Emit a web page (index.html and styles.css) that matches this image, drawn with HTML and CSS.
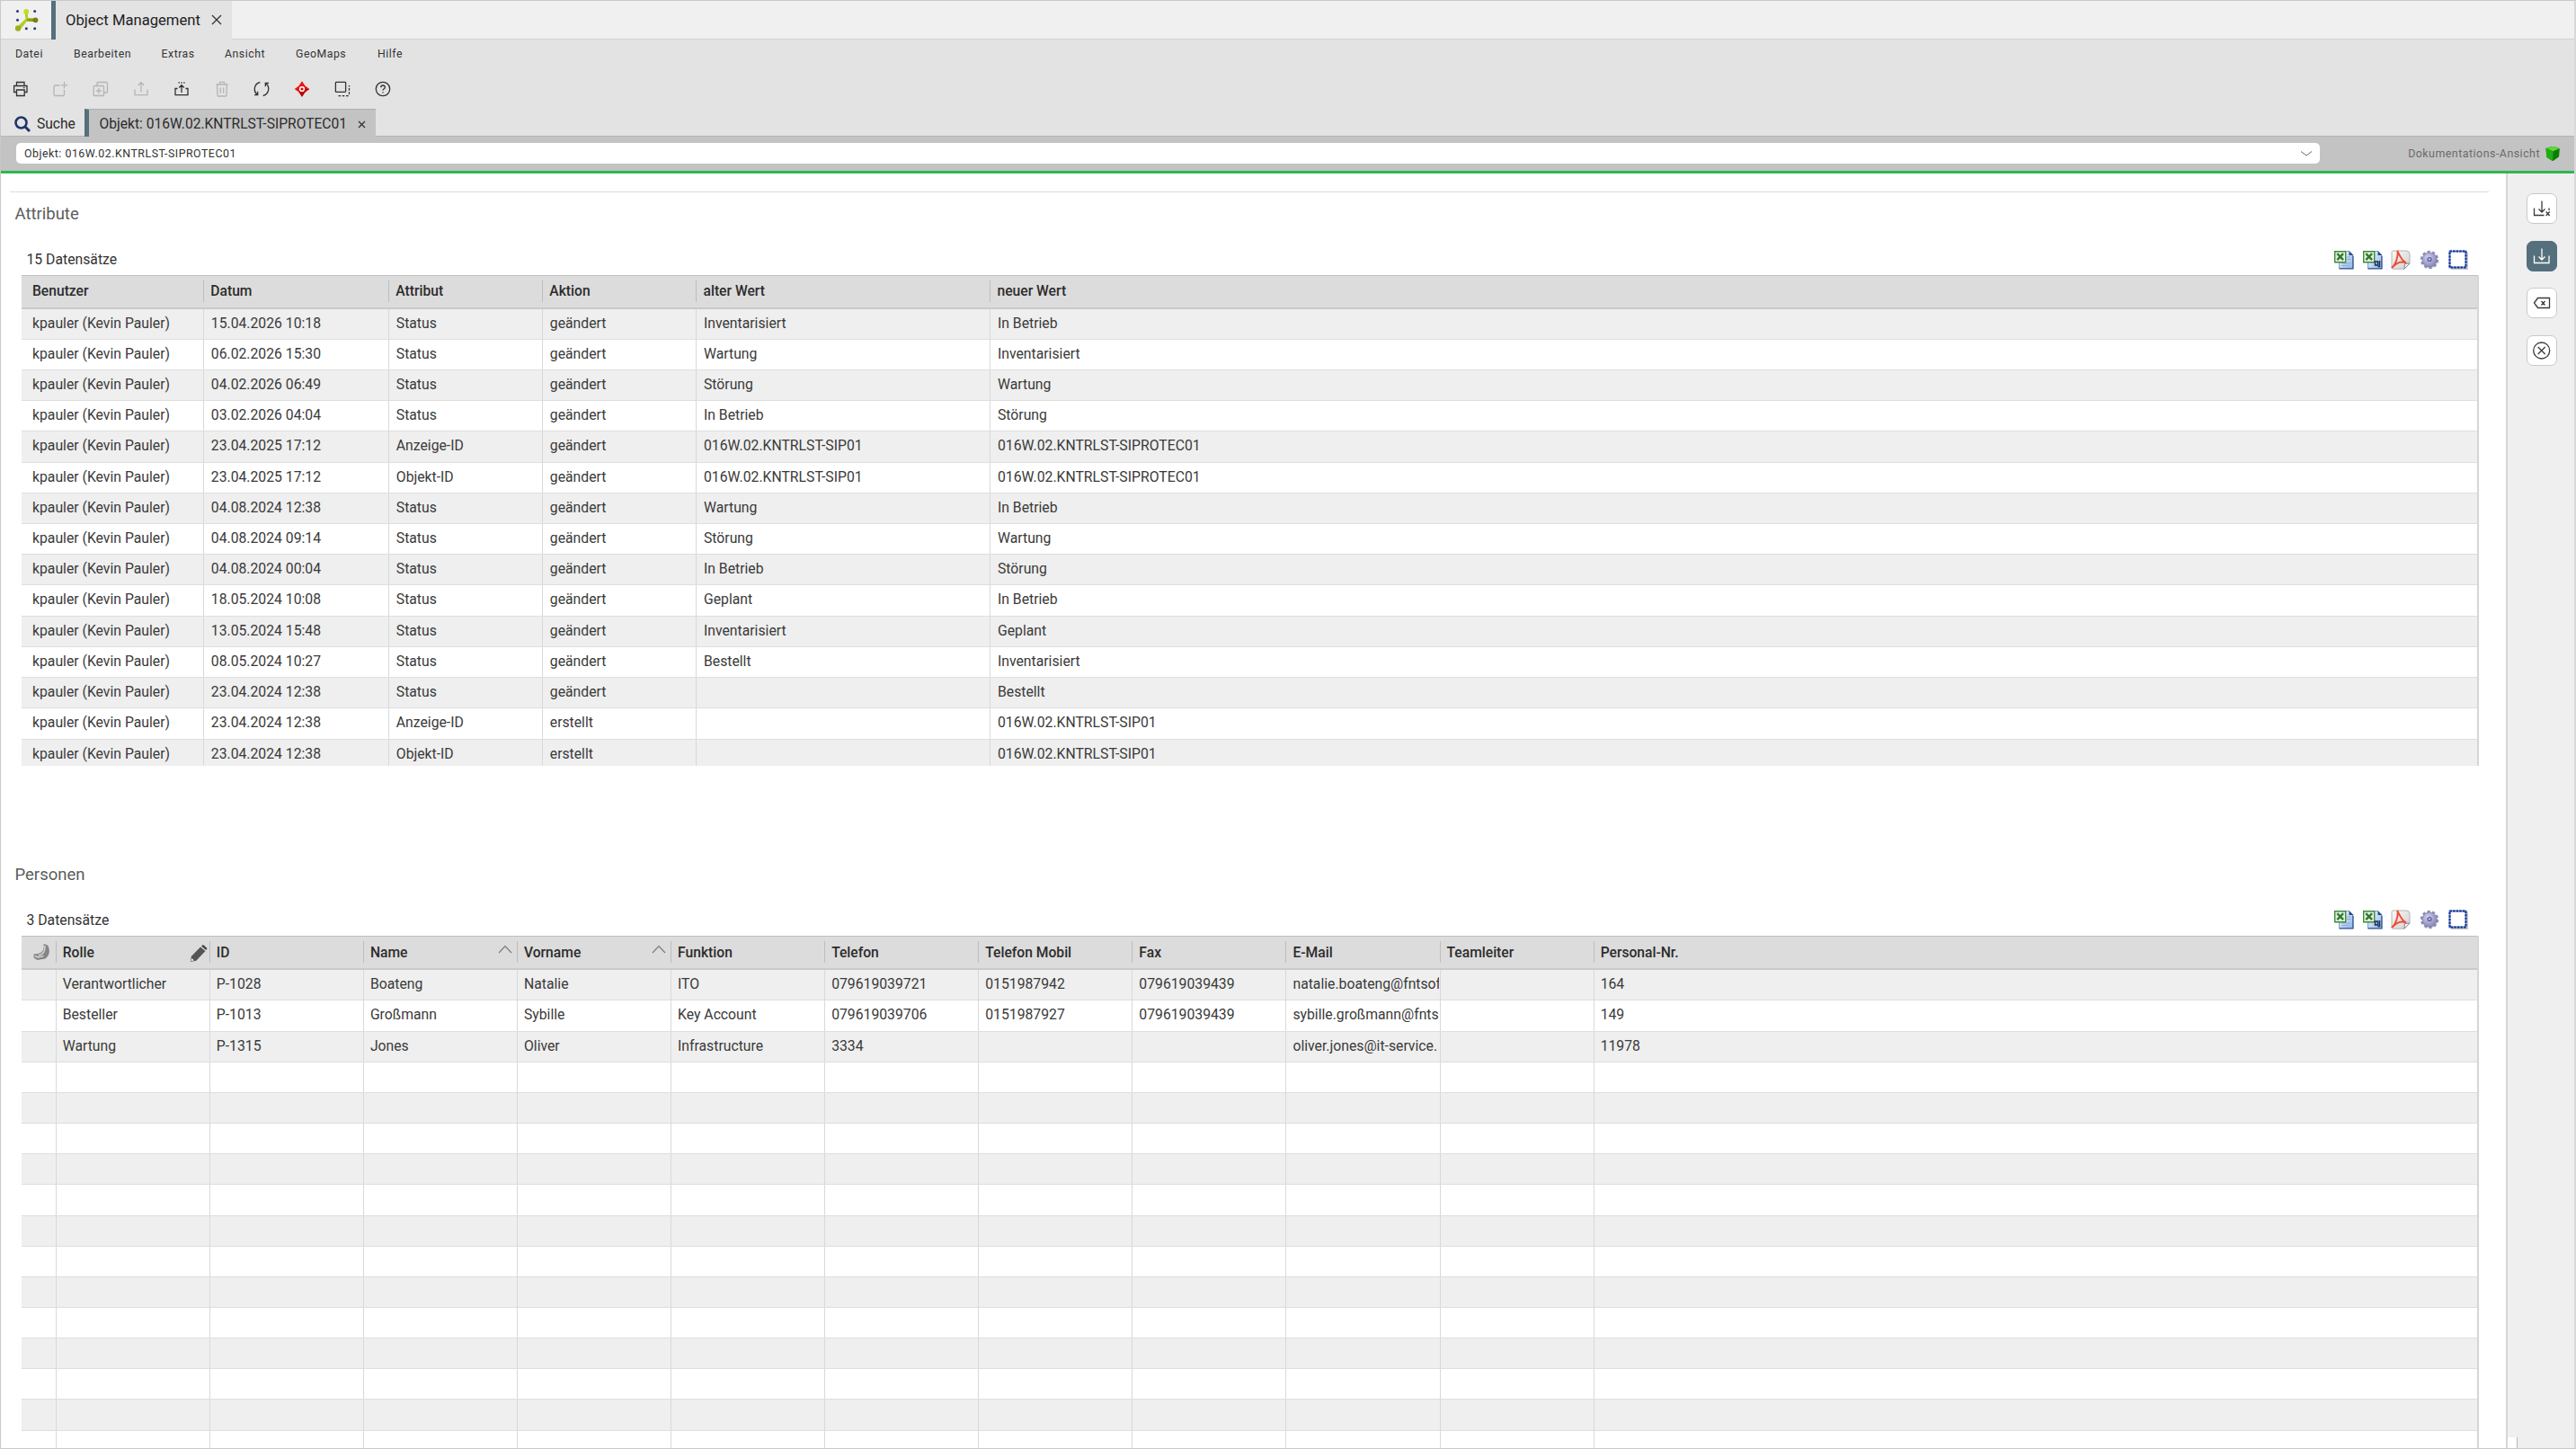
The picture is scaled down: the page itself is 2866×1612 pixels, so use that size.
FILE: index.html
```html
<!DOCTYPE html>
<html lang="de">
<head>
<meta charset="utf-8">
<title>Object Management</title>
<link rel="stylesheet" href="styles.css">
</head>
<body>
<svg class="defs" aria-hidden="true">
  <defs>
    <linearGradient id="page" x1="0" y1="0" x2="1" y2="1"><stop offset="0" stop-color="#fff"/><stop offset="1" stop-color="#8db4ea"/></linearGradient>
    <linearGradient id="paper" x1="0" y1="0" x2="1" y2="1"><stop offset="0" stop-color="#fafafa"/><stop offset="1" stop-color="#cfcfcf"/></linearGradient>
    <radialGradient id="gear" cx=".4" cy=".35" r=".7"><stop offset="0" stop-color="#d0d0f0"/><stop offset="1" stop-color="#8484b4"/></radialGradient>
  </defs>
  <symbol id="i-excel" viewBox="0 0 22 22">
    <path d="M5.500 1.500h11l4 4v15h-15z" fill="url(#page)" stroke="#7c9fd4"/><path d="M16.500 1v5h5z" fill="#2d4f86"/>
    <path d="M14 8h4.500M14 10.500h4.500M8 15h10.500M8 17.500h8" stroke="#8aabdc"/><path d="M5.500 20.800h15.500v-14" fill="none" stroke="#30558f" stroke-width="1.300"/>
    <path d="M.7 1.700h12v12H.7z" fill="#e6f2e2" stroke="#3f8a3a" stroke-width="1.400"/>
    <path d="M3.300 4.200l6.800 7M10.100 4.200l-6.800 7" stroke="#2f7d2b" stroke-width="2.400"/>
  </symbol>
  <symbol id="i-excel-all" viewBox="0 0 22 22">
    <path d="M5.500 1.500h11l4 4v15h-15z" fill="url(#page)" stroke="#7c9fd4"/><path d="M16.500 1v5h5z" fill="#2d4f86"/>
    <path d="M5.500 20.800h15.500v-14" fill="none" stroke="#30558f" stroke-width="1.300"/>
    <path d="M.7 1.700h12v12H.7z" fill="#e6f2e2" stroke="#3f8a3a" stroke-width="1.400"/>
    <path d="M3.300 4.200l6.800 7M10.100 4.200l-6.800 7" stroke="#2f7d2b" stroke-width="2.400"/>
    <path d="M13.500 13h3v4h-3zM18.500 12v6.500h-2" fill="none" stroke="#1d2f55" stroke-width="1.500"/>
  </symbol>
  <symbol id="i-pdf" viewBox="0 0 22 22">
    <path d="M2.500 1h14.500q4 0 4 4v10l-6 6.200H2.500q-1.500 0-1.500-1.500V2.500Q1 1 2.500 1z" fill="url(#paper)" stroke="#b4b4b4"/>
    <path d="M15 21.200l.5-5.700 5.500-.5z" fill="#fff" stroke="#858585"/>
    <path d="M1.500 19.500C5 16.500 8.500 8 7.500 1.500c2 4 4 10 9 12.500-5-1.300-9-.7-15 5.500z" fill="none" stroke="#f04a35" stroke-width="1.900" stroke-linejoin="round"/>
  </symbol>
  <symbol id="i-gear" viewBox="0 0 22 22">
    <circle cx="11.500" cy="12.300" r="8.500" fill="#000" opacity=".15"/>
    <circle cx="11" cy="11" r="8.700" fill="none" stroke="#8f8fba" stroke-width="3" stroke-dasharray="3.200 2.266"/>
    <circle cx="11" cy="11" r="8" fill="url(#gear)" stroke="#7c7ca8" stroke-width=".8"/>
    <circle cx="11" cy="10.500" r="2.600" fill="#5e5e96"/><circle cx="11" cy="10.500" r="1.200" fill="#c4c4e6"/>
  </symbol>
  <symbol id="i-select" viewBox="0 0 22 22">
    <path d="M3 21h18.500V3" fill="none" stroke="#000" stroke-opacity=".22" stroke-width="2"/>
    <path d="M1.500 1.500h18v18h-18z" fill="#fff" stroke="#7f97cf" stroke-width="2"/>
    <path d="M1.500 1.500h18v18h-18z" fill="none" stroke="#0b2f93" stroke-width="2" stroke-dasharray="2.400 1.200"/>
  </symbol>
</svg>

<div class="app">
  <header class="topbar">
    <div class="brand">
      <svg width="26" height="26" viewBox="0 0 26 26">
        <g fill="#24386e"><circle cx="2.500" cy="2.500" r="1.500"/><circle cx="21.700" cy="2.500" r="1.500"/><circle cx="2.500" cy="12.300" r="1.500"/><circle cx="12.300" cy="21.700" r="1.500"/><circle cx="21.700" cy="21.700" r="1.500"/></g>
        <path d="M10.500 3l1 8L2 20l3.500 3 7.500-9.500 9 .5v-3.500l-8-.7L14 3z" fill="#b4cc1e"/>
        <circle cx="12.200" cy="2.900" r="2.900" fill="#c3dd20"/><circle cx="3" cy="21.500" r="3.200" fill="#9bb01c"/>
        <path d="M13 11l9-.5v3.700l-9-.7z" fill="#8f9c1a"/><circle cx="22.500" cy="12.300" r="2.900" fill="#76801a"/>
      </svg>
    </div>
    <div class="app-tab"><span>Object Management</span>
      <svg width="12" height="12" viewBox="0 0 12 12"><path d="M1 1l10 10M11 1L1 11" stroke="#333" stroke-width="1.300"/></svg>
    </div>
  </header>

  <nav class="menu">
    <span class="m1">Datei</span><span class="m2">Bearbeiten</span><span class="m3">Extras</span><span class="m4">Ansicht</span><span class="m5">GeoMaps</span><span class="m6">Hilfe</span>
  </nav>

  <div class="toolbar">
    <svg viewBox="0 0 18 18"><path d="M4.500 5V1.500h8.500V5M4.500 12.500H1.600V5.500h14.400v7h-2.800M4.500 10h8.700v6.500H4.500zM12 7.700h1.500"/></svg>
    <svg class="off" viewBox="0 0 18 18"><path d="M8.500 5H3.500Q2 5 2 6.500v8.500q0 1.500 1.500 1.500H12q1.500 0 1.500-1.500V10M13.500 1v7.500M9.700 4.800h7.500"/></svg>
    <svg class="off" viewBox="0 0 18 18"><path d="M2.200 5.500h9.300q1 0 1 1v9q0 1-1 1H2.200q-1 0-1-1v-9q0-1 1-1zM5 5V2.500q0-1 1-1h9.500q1 0 1 1V12q0 1-1 1h-2.500M6.900 8v6M3.900 11h6"/></svg>
    <svg class="off" viewBox="0 0 18 18"><path d="M2 9.500v6.200h14V9.500M9 12.500V2M5.700 5L9 1.700 12.300 5"/></svg>
    <svg viewBox="0 0 18 18"><path d="M4.500 8.500H2v7.200h14V8.500h-2.500M9 13V5M6.200 7.500L9 4.700l2.800 2.800M5.500 2h1.300M8.400 2h1.300M11.300 2h1.300"/></svg>
    <svg class="off" viewBox="0 0 18 18"><path d="M2.500 4h13M6.500 3.700V1.400h5v2.300M3.500 4.500l.5 11.500q.1 1 1 1h8q.9 0 1-1l.5-11.500M7.300 7.500v6.300M10.700 7.500v6.300"/></svg>
    <svg viewBox="0 0 18 18"><path d="M7.300 1.500C.5 3.200-.5 11.500 4.200 15.200M4.700 11.700v4H1M10.700 16.500C17.500 14.800 18.500 6.500 13.800 2.800M13.300 6.300v-4H17"/></svg>
    <svg class="fill" viewBox="0 0 18 18"><path d="M9 .3l3.500 5.200L17.300 9l-4.800 3.500L9 17.700l-3.500-5.200L.7 9l4.800-3.500z" fill="#ee1313"/><path d="M9 17.700l-3.500-5.200L9 9l8.300 0-4.800 3.500z" fill="#b90808"/><circle cx="9" cy="9" r="3.100" fill="#fff"/><circle cx="9" cy="9" r="1.600" fill="#d01010"/></svg>
    <svg viewBox="0 0 18 18"><path d="M2.200 1.300h9.600q.8 0 .8.800v9.500q0 .8-.8.800H2.200q-.8 0-.8-.8V2.100q0-.8.800-.8z"/><path d="M4.500 16.600h10q2 0 2-2V5" stroke-dasharray="2.600 1.600"/></svg>
    <svg viewBox="0 0 18 18"><circle cx="9" cy="9" r="7.700"/><path d="M6.700 7.300q0-2.300 2.300-2.300t2.300 2q0 1.200-1.300 2-1 .7-1 1.600M9 12.200v1.400"/></svg>
  </div>

  <div class="doc-tabs">
    <div class="search-tab"><svg width="18" height="18" viewBox="0 0 18 18"><circle cx="7.500" cy="7.500" r="6" fill="none" stroke="#20346b" stroke-width="2.600"/><path d="M12 12l5 5" stroke="#20346b" stroke-width="3"/></svg><span>Suche</span></div>
    <div class="doc-tab"><span>Objekt: 016W.02.KNTRLST-SIPROTEC01</span><svg width="9" height="9" viewBox="0 0 9 9"><path d="M1 1l7 7M8 1L1 8" stroke="#333" stroke-width="1.300"/></svg></div>
  </div>

  <div class="context">
    <div class="combo"><span>Objekt: 016W.02.KNTRLST-SIPROTEC01</span><svg width="14" height="8" viewBox="0 0 14 8"><path d="M1 1.500l6 4.500 6-4.500" fill="none" stroke="#666" stroke-width="1"/></svg></div>
    <div class="view">Dokumentations-Ansicht
      <svg width="18" height="18" viewBox="0 0 18 18"><path d="M1.500 3.500Q1.500 3 2.500 2.700L8.500 1h1.500l5.800 1.800q1 .3 1 1.200l-.7 7.800q-.1.800-.8 1.200L9.800 16.700q-.8.500-1.500 0L3 13.300q-.6-.4-.7-1.200z" fill="#0c7d07"/><path d="M2 3.300L8.500 1h1.500l6.500 2.300L9.500 6.200z" fill="#5fd838"/><path d="M1.600 3.500l7.900 2.700-.4 10.700-6.300-3.700q-.5-.5-.6-1.200z" fill="#1fae10"/></svg>
    </div>
  </div>

  <div class="body">
    <main class="content">
      <hr>
      <section class="block attributes">
        <h2>Attribute</h2>
        <div class="caption"><span>15 Datensätze</span><div class="exports"><svg><use href="#i-excel"/></svg><svg><use href="#i-excel-all"/></svg><svg><use href="#i-pdf"/></svg><svg><use href="#i-gear"/></svg><svg><use href="#i-select"/></svg></div></div>
        <div class="table t-attr">
          <div class="head"><span>Benutzer</span><span>Datum</span><span>Attribut</span><span>Aktion</span><span>alter Wert</span><span>neuer Wert</span></div>
          <div class="row"><span>kpauler (Kevin Pauler)</span><span>15.04.2026 10:18</span><span>Status</span><span>geändert</span><span>Inventarisiert</span><span>In Betrieb</span></div>
          <div class="row"><span>kpauler (Kevin Pauler)</span><span>06.02.2026 15:30</span><span>Status</span><span>geändert</span><span>Wartung</span><span>Inventarisiert</span></div>
          <div class="row"><span>kpauler (Kevin Pauler)</span><span>04.02.2026 06:49</span><span>Status</span><span>geändert</span><span>Störung</span><span>Wartung</span></div>
          <div class="row"><span>kpauler (Kevin Pauler)</span><span>03.02.2026 04:04</span><span>Status</span><span>geändert</span><span>In Betrieb</span><span>Störung</span></div>
          <div class="row"><span>kpauler (Kevin Pauler)</span><span>23.04.2025 17:12</span><span>Anzeige-ID</span><span>geändert</span><span>016W.02.KNTRLST-SIP01</span><span>016W.02.KNTRLST-SIPROTEC01</span></div>
          <div class="row"><span>kpauler (Kevin Pauler)</span><span>23.04.2025 17:12</span><span>Objekt-ID</span><span>geändert</span><span>016W.02.KNTRLST-SIP01</span><span>016W.02.KNTRLST-SIPROTEC01</span></div>
          <div class="row"><span>kpauler (Kevin Pauler)</span><span>04.08.2024 12:38</span><span>Status</span><span>geändert</span><span>Wartung</span><span>In Betrieb</span></div>
          <div class="row"><span>kpauler (Kevin Pauler)</span><span>04.08.2024 09:14</span><span>Status</span><span>geändert</span><span>Störung</span><span>Wartung</span></div>
          <div class="row"><span>kpauler (Kevin Pauler)</span><span>04.08.2024 00:04</span><span>Status</span><span>geändert</span><span>In Betrieb</span><span>Störung</span></div>
          <div class="row"><span>kpauler (Kevin Pauler)</span><span>18.05.2024 10:08</span><span>Status</span><span>geändert</span><span>Geplant</span><span>In Betrieb</span></div>
          <div class="row"><span>kpauler (Kevin Pauler)</span><span>13.05.2024 15:48</span><span>Status</span><span>geändert</span><span>Inventarisiert</span><span>Geplant</span></div>
          <div class="row"><span>kpauler (Kevin Pauler)</span><span>08.05.2024 10:27</span><span>Status</span><span>geändert</span><span>Bestellt</span><span>Inventarisiert</span></div>
          <div class="row"><span>kpauler (Kevin Pauler)</span><span>23.04.2024 12:38</span><span>Status</span><span>geändert</span><span></span><span>Bestellt</span></div>
          <div class="row"><span>kpauler (Kevin Pauler)</span><span>23.04.2024 12:38</span><span>Anzeige-ID</span><span>erstellt</span><span></span><span>016W.02.KNTRLST-SIP01</span></div>
          <div class="row"><span>kpauler (Kevin Pauler)</span><span>23.04.2024 12:38</span><span>Objekt-ID</span><span>erstellt</span><span></span><span>016W.02.KNTRLST-SIP01</span></div>
        </div>
      </section>

      <section class="block persons">
        <h2>Personen</h2>
        <div class="caption"><span>3 Datensätze</span><div class="exports"><svg><use href="#i-excel"/></svg><svg><use href="#i-excel-all"/></svg><svg><use href="#i-pdf"/></svg><svg><use href="#i-gear"/></svg><svg><use href="#i-select"/></svg></div></div>
        <div class="table t-pers">
          <div class="head">
            <span class="mark"><svg width="20" height="20" viewBox="0 0 20 20"><path d="M12.500 1l4.500 1.500c3 5.500 2.500 11-2.500 15l-9 1.500-4-2.500v-4l5-.5c5-1.500 7-5 6-11z" fill="#858585"/><path d="M14 3c.5 6-2.500 10-7.500 11M2.500 14.500l4 1.500 6-1.500" fill="none" stroke="#d4d4d4" stroke-width="1.500"/></svg></span>
            <span>Rolle<svg class="pen" width="20" height="20" viewBox="0 0 20 20"><path d="M1 19l.8-6L12 2.500 17.500 7 7.300 17.800z" fill="#555"/><path d="M13 1.500L15 0l4.500 4-1.300 2z" fill="#444"/><path d="M1.500 18.500l.8-3.500 2.500 2.200z" fill="#eee"/></svg></span>
            <span>ID</span>
            <span>Name<svg class="asc" width="16" height="10" viewBox="0 0 16 10"><path d="M1 9l7-7.500L15 9" fill="none" stroke="#777" stroke-width="1.100"/></svg></span>
            <span>Vorname<svg class="asc" width="16" height="10" viewBox="0 0 16 10"><path d="M1 9l7-7.500L15 9" fill="none" stroke="#777" stroke-width="1.100"/></svg></span>
            <span>Funktion</span><span>Telefon</span><span>Telefon Mobil</span><span>Fax</span><span>E-Mail</span><span>Teamleiter</span><span>Personal-Nr.</span>
          </div>
          <div class="row"><span></span><span>Verantwortlicher</span><span>P-1028</span><span>Boateng</span><span>Natalie</span><span>ITO</span><span>079619039721</span><span>0151987942</span><span>079619039439</span><span>natalie.boateng@fntsof</span><span></span><span>164</span></div>
          <div class="row"><span></span><span>Besteller</span><span>P-1013</span><span>Großmann</span><span>Sybille</span><span>Key Account</span><span>079619039706</span><span>0151987927</span><span>079619039439</span><span>sybille.großmann@fnts</span><span></span><span>149</span></div>
          <div class="row"><span></span><span>Wartung</span><span>P-1315</span><span>Jones</span><span>Oliver</span><span>Infrastructure</span><span>3334</span><span></span><span></span><span>oliver.jones@it-service.</span><span></span><span>11978</span></div>
          <div class="row"><span></span><span></span><span></span><span></span><span></span><span></span><span></span><span></span><span></span><span></span><span></span><span></span></div>
          <div class="row"><span></span><span></span><span></span><span></span><span></span><span></span><span></span><span></span><span></span><span></span><span></span><span></span></div>
          <div class="row"><span></span><span></span><span></span><span></span><span></span><span></span><span></span><span></span><span></span><span></span><span></span><span></span></div>
          <div class="row"><span></span><span></span><span></span><span></span><span></span><span></span><span></span><span></span><span></span><span></span><span></span><span></span></div>
          <div class="row"><span></span><span></span><span></span><span></span><span></span><span></span><span></span><span></span><span></span><span></span><span></span><span></span></div>
          <div class="row"><span></span><span></span><span></span><span></span><span></span><span></span><span></span><span></span><span></span><span></span><span></span><span></span></div>
          <div class="row"><span></span><span></span><span></span><span></span><span></span><span></span><span></span><span></span><span></span><span></span><span></span><span></span></div>
          <div class="row"><span></span><span></span><span></span><span></span><span></span><span></span><span></span><span></span><span></span><span></span><span></span><span></span></div>
          <div class="row"><span></span><span></span><span></span><span></span><span></span><span></span><span></span><span></span><span></span><span></span><span></span><span></span></div>
          <div class="row"><span></span><span></span><span></span><span></span><span></span><span></span><span></span><span></span><span></span><span></span><span></span><span></span></div>
          <div class="row"><span></span><span></span><span></span><span></span><span></span><span></span><span></span><span></span><span></span><span></span><span></span><span></span></div>
          <div class="row"><span></span><span></span><span></span><span></span><span></span><span></span><span></span><span></span><span></span><span></span><span></span><span></span></div>
          <div class="row"><span></span><span></span><span></span><span></span><span></span><span></span><span></span><span></span><span></span><span></span><span></span><span></span></div>
        </div>
      </section>
    </main>

    <aside class="side">
      <button><svg viewBox="0 0 20 20"><path d="M1.500 9.500v8h11M10 1.500v12M6.500 10.500l3.500 3.500 3.500-3.500M18 9.500v2.500M14.700 13.500l4 4.500M18.700 13.500l-4 4.500"/></svg></button>
      <button class="on"><svg viewBox="0 0 20 20"><path d="M1.500 9.500v8h16.500v-8M10 1.500v12M6.500 10.500l3.500 3.500 3.500-3.500"/></svg></button>
      <button><svg viewBox="0 0 20 20"><path d="M1.500 10l4-5.500h13v11h-13zM9.500 8l4 4.500M13.500 8l-4 4.500"/></svg></button>
      <button><svg viewBox="0 0 20 20"><circle cx="9.700" cy="10" r="9"/><path d="M5.700 6l8 8M13.700 6l-8 8"/></svg></button>
      <div class="corner"></div>
    </aside>
  </div>
</div>
</body>
</html>
```
FILE: styles.css
```css
* { box-sizing: border-box; }
body { margin: 0; font-family: Roboto, "Liberation Sans", sans-serif; font-size: 15.75px; color: #3a3a3a; background: #fff; }
svg { display: block; flex: none; }
.defs { width: 0; height: 0; position: absolute; }

.app { width: 2866px; height: 1612px; display: flex; flex-direction: column; overflow: hidden; border: 1px solid #c9c9c9; border-right: 2px solid #d8d8d8; background: #e3e3e3; }

.topbar { height: 43px; flex: none; display: flex; background: #f0f0f0; box-shadow: inset 0 -1px #d2d2d2; }
.brand { width: 56px; padding: 9px 0 0 16px; }
.app-tab { width: 201px; display: flex; align-items: center; gap: 12px; padding: 0 0 1px 11px; border-left: 5px solid #54707c; background: #e3e3e3; font-size: 16.65px; color: #222; white-space: nowrap; }

.menu { height: 32px; flex: none; display: flex; padding-left: 16px; line-height: 32px; font-size: 12.3px; letter-spacing: .52px; color: #333; }
.m1 { width: 65px; } .m2 { width: 97.5px; } .m3 { width: 70.500px; } .m4 { width: 79px; } .m5 { width: 91px; }

.toolbar { height: 45px; flex: none; display: flex; align-items: center; gap: 26.8px; padding-left: 12.7px; }
.toolbar svg { width: 18px; height: 18px; fill: none; stroke: #333; stroke-width: 1.300; }
.toolbar .off { stroke: #b5b5b5; }
.toolbar .fill { stroke: none; }

.doc-tabs { height: 31px; flex: none; display: flex; font-size: 15.6px; color: #2b2b2b; box-shadow: inset 0 -1px #b5b5b5; }
.search-tab { width: 93px; display: flex; align-items: center; gap: 7px; padding: 2px 0 0 15px; }
.doc-tab { width: 324px; display: flex; align-items: center; gap: 12px; padding: 2px 0 0 11.5px; border-left: 5px solid #54707c; border-top: 1px solid #b0b0b0; background: #c3c3c3; white-space: nowrap; }

.context { height: 41px; flex: none; display: flex; align-items: center; padding: 0 15px 3px 17px; background: #c3c3c3; border-bottom: 3px solid #2db84d; font-size: 12.4px; letter-spacing: .5px; }
.combo { width: 2563px; height: 23px; margin-top: 1px; display: flex; align-items: center; justify-content: space-between; padding: 1px 8px 0 9px; border-radius: 5px; background: #fff; color: #333; }
.view { flex: 1; display: flex; align-items: center; justify-content: flex-end; gap: 5px; padding-top: 2px; color: #6a6a6a; white-space: nowrap; }

.body { flex: 1; min-height: 0; display: flex; background: #fff; }
.content { width: 2787px; overflow: hidden; }
.content hr { height: 1px; margin: 20px 19px 0 10px; border: 0; background: #dcdcdc; }
.block h2 { height: 48px; margin: 0; padding-left: 15.500px; line-height: 49px; font-size: 18.500px; font-weight: 400; color: #5c5c5c; }
.attributes { height: 735px; }
.caption { height: 44px; display: flex; align-items: center; justify-content: space-between; padding: 9px 42px 0 28.500px; color: #333; }
.persons .caption { padding-top: 8px; }
.exports { display: flex; gap: 9.800px; }
.exports svg { width: 22px; height: 22px; }

.table { width: 2734px; margin-left: 23px; overflow: hidden; border-right: 2px solid #d6d6d6; }
.t-attr { height: 546px; }
.t-pers { height: 580px; }
.head, .row { display: grid; }
.t-attr .head, .t-attr .row { grid-template-columns: 202.300px 206px 171px 171.200px 327px 1fr; }
.t-pers .head, .t-pers .row { grid-template-columns: 37.700px repeat(10, 171.1px) 1fr; }
.head { height: 37.500px; padding: 5px 0 6px; border-top: 1px solid #bfbfbf; border-bottom: 2px solid #cacaca; background: #dcdcdc; font-size: 15.650px; font-weight: 500; color: #2c2c2c; }
.t-pers .head { height: 38.300px; padding-bottom: 7px; }
.head span { display: flex; align-items: center; justify-content: space-between; padding-left: 7px; border-left: 1px solid #bdbdbd; white-space: nowrap; }
.row { height: 34.220px; border-bottom: 1px solid #dedede; }
.row:nth-child(even) { background: #efefef; }
.row span { min-width: 0; padding-left: 7.500px; border-left: 1.500px solid #d9d9d9; line-height: 31px; white-space: nowrap; overflow: hidden; }
.t-pers .row span { margin-right: 1px; padding-left: 7px; }
.t-pers .row { height: 34.170px; }
.head span:first-child, .row span:first-child { border-left: 0; padding-left: 12px; }
.head .asc { margin: -7px 5px 0 0; }
.head .pen { margin: 4px 2px 0 0; }

.side { flex: 1; display: flex; flex-direction: column; align-items: flex-start; gap: 19.600px; padding: 22px 0 0 21px; border-left: 2px solid #d6d6d6; background: #efefef; }
.side button { width: 34px; height: 34px; display: grid; place-items: center; flex: none; margin-bottom: -1px; padding: 0 1px 0 0; border: 1px solid #c9c9c9; border-radius: 7px; background: #fff; }
.side .on { border-color: #54707c; background: #54707c; }
.side svg { width: 20px; height: 20px; fill: none; stroke: #3a3a3a; stroke-width: 1.300; }
.side .on svg { stroke: #fff; }
.corner { width: 11px; height: 12px; margin: auto 0 0 -21px; border-right: 1px solid #b8b8b8; background: #fff; }
```
